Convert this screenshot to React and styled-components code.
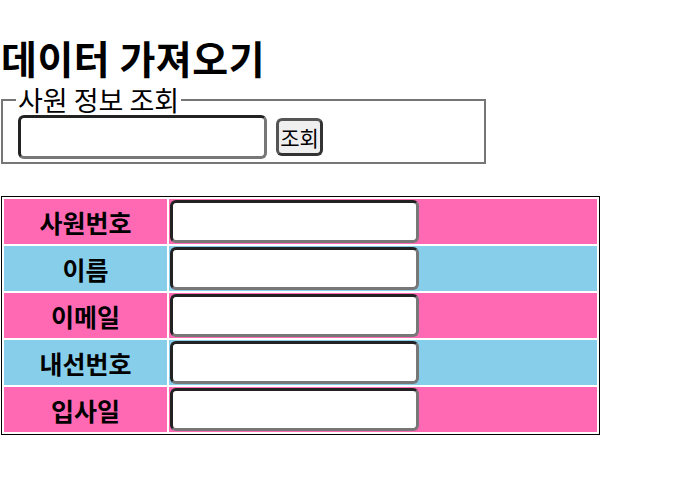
import React from "react";
import styled, { createGlobalStyle } from "styled-components";

const GlobalStyle = createGlobalStyle`
  html, body { margin: 0; padding: 0; background: #ffffff; }
  body { font-family: "Noto Sans CJK KR", "Noto Sans", sans-serif; color: #000; }
`;

const Page = styled.div`
  display: flex;
  flex-direction: column;
  align-items: flex-start;
  padding: 31px 0 0 1px;
`;

const Title = styled.h1`
  margin: 0;
  font-size: 39px;
  line-height: 52px;
  letter-spacing: 0.5px;
  font-weight: 700;
`;

const Fieldset = styled.fieldset`
  box-sizing: border-box;
  width: 485px;
  height: 76px;
  margin: 5px 0 0 0;
  padding: 0 0 0 15px;
  border: 2px solid #767676;
  display: flex;
  align-items: center;
`;

const Legend = styled.legend`
  font-size: 27px;
  line-height: 24px;
  padding: 0 2px;
  margin-left: -2px;
`;

const FieldRow = styled.div`
  display: flex;
  align-items: center;
  gap: 9px;
  margin-top: 3px;
`;

const TextInput = styled.input`
  box-sizing: border-box;
  width: 249px;
  height: ${(p) => p.$h || 43}px;
  border-style: solid;
  border-width: 3px;
  border-color: #222222 #777777 #777777 #222222;
  border-radius: 6px;
  background: #ffffff;
  padding: 0 6px;
  font-family: inherit;
  font-size: 18px;
  outline: none;
`;

const Button = styled.button`
  box-sizing: border-box;
  width: 47px;
  height: 38px;
  padding: 0;
  border-style: solid;
  border-width: 3px;
  border-color: #555555 #333333 #333333 #555555;
  border-radius: 6px;
  background: #efefef;
  font-family: inherit;
  font-size: 21px;
  color: #000;
  display: flex;
  align-items: center;
  justify-content: center;
`;

const Table = styled.table`
  margin-top: 32px;
  width: 599px;
  border: 1px solid #000;
  border-spacing: 2px;
  border-collapse: separate;
`;

const Row = styled.tr`
  height: 45px;
  background: ${(p) => (p.$alt ? "#87ceeb" : "#ff69b4")};
`;

const LabelCell = styled.th`
  width: 163px;
  padding: 0;
  font-size: 25px;
  font-weight: 700;
  text-align: center;
  vertical-align: middle;
`;

const ValueCell = styled.td`
  padding: 0 0 0 1px;
  vertical-align: middle;
`;

const fields = ["사원번호", "이름", "이메일", "내선번호", "입사일"];

export default function App() {
  return (
    <>
      <GlobalStyle />
      <Page>
        <Title>데이터 가져오기</Title>
        <Fieldset>
          <Legend>사원 정보 조회</Legend>
          <FieldRow>
            <TextInput $h={44} />
            <Button>조회</Button>
          </FieldRow>
        </Fieldset>
        <Table>
          <tbody>
            {fields.map((f, i) => (
              <Row key={f} $alt={i % 2 === 1}>
                <LabelCell>{f}</LabelCell>
                <ValueCell>
                  <TextInput />
                </ValueCell>
              </Row>
            ))}
          </tbody>
        </Table>
      </Page>
    </>
  );
}
